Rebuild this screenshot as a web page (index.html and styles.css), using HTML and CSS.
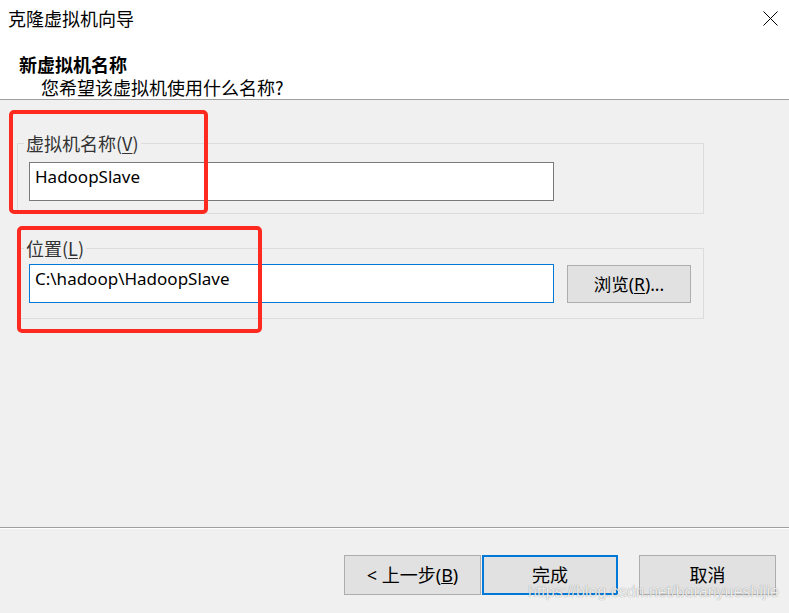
FILE: index.html
```html
<!DOCTYPE html>
<html lang="zh-CN">
<head>
<meta charset="utf-8">
<title>克隆虚拟机向导</title>
<link rel="stylesheet" href="styles.css">
</head>
<body>
<div class="dialog">
  <header class="header">
    <div class="titlebar">
      <span class="title">克隆虚拟机向导</span>
      <span class="close" aria-label="关闭">
        <svg width="15" height="15" viewBox="0 0 15 15"><path d="M0.5 0.5 L14.5 14.5 M14.5 0.5 L0.5 14.5" stroke="#000" stroke-width="1" fill="none"/></svg>
      </span>
    </div>
    <div class="heading">新虚拟机名称</div>
    <div class="subheading">您希望该虚拟机使用什么名称?</div>
  </header>
  <main class="content">
    <fieldset class="group group-name">
      <legend>虚拟机名称(<u>V</u>)</legend>
      <div class="field-row">
        <div class="textbox">HadoopSlave</div>
      </div>
    </fieldset>
    <fieldset class="group group-location">
      <legend>位置(<u>L</u>)</legend>
      <div class="field-row">
        <div class="textbox focused">C:\hadoop\HadoopSlave</div>
        <span class="btn browse">浏览(<u>R</u>)...</span>
      </div>
    </fieldset>
  </main>
  <footer class="footer">
    <span class="btn back">&lt; 上一步(<u>B</u>)</span>
    <span class="btn finish">完成</span>
    <span class="btn cancel">取消</span>
  </footer>
  <div class="mark mark-name"></div>
  <div class="mark mark-location"></div>
  <div class="watermark">https://blog.csdn.net/boranyueshijie</div>
</div>
</body>
</html>
```
FILE: styles.css
```css
* { box-sizing: border-box; }
html, body { margin: 0; padding: 0; }
body {
  background: #f0f0f0;
  font-family: "Noto Sans", "Noto Sans CJK SC", sans-serif;
  color: #000;
}
.dialog {
  position: relative;
  width: 789px;
  height: 613px;
  display: flex;
  flex-direction: column;
  background: #f0f0f0;
  overflow: hidden;
}
.header {
  height: 100px;
  background: #fff;
  border-bottom: 1px solid #a0a0a0;
  flex: none;
}
.titlebar {
  height: 37px;
  display: flex;
  align-items: center;
  justify-content: space-between;
  padding: 0 11px 0 8px;
}
.title {
  font-family: "Noto Sans CJK SC", sans-serif;
  font-size: 18px;
  line-height: 37px;
}
.close { display: flex; width: 15px; height: 15px; }
.heading {
  margin-top: 16px;
  padding-left: 19px;
  font-family: "Noto Sans CJK SC", sans-serif;
  font-weight: 700;
  font-size: 18px;
  line-height: 22px;
}
.subheading {
  margin-top: 1px;
  padding-left: 41px;
  font-family: "Noto Sans CJK SC", sans-serif;
  font-size: 18px;
  line-height: 22px;
}
.content {
  flex: 1;
  padding: 0 0 0 17px;
}
.group {
  width: 687px;
  margin: 0;
  border: 1px solid #dcdcdc;
  min-width: 0;
}
.group legend {
  font-family: "Noto Sans CJK SC", sans-serif;
  font-size: 18px;
  line-height: 20px;
  color: #333;
  padding: 0 2px;
  margin-left: -5px;
}
.group u { text-underline-offset: 2px; }
.group-name {
  margin-top: 33px;
  padding: 9px 11px 12px 11px;
}
.group-location {
  margin-top: 24px;
  padding: 6px 11px 15px 11px;
}
.field-row {
  display: flex;
  align-items: center;
}
.textbox {
  width: 525px;
  height: 39px;
  background: #fff;
  border: 1px solid #7a7a7a;
  padding: 0 5px;
  font-size: 17px;
  line-height: 27px;
  white-space: nowrap;
}
.textbox.focused { border-color: #0078d7; }
.btn {
  display: flex;
  align-items: center;
  justify-content: center;
  background: #e1e1e1;
  border: 1px solid #adadad;
  font-family: "Noto Sans", "Noto Sans CJK SC", sans-serif;
  font-size: 18px;
  line-height: 18px;
  color: #000;
}
.browse {
  width: 124px;
  height: 38px;
  margin-left: 13px;
  font-size: 17.5px;
}
.footer {
  flex: none;
  height: 86px;
  border-top: 1px solid #a0a0a0;
  box-shadow: inset 0 1px 0 #fff;
  display: flex;
  justify-content: flex-end;
  align-items: flex-start;
  padding: 27px 13px 0 0;
}
.footer .btn { height: 40px; }
.back { width: 137px; }
.finish {
  width: 136px;
  margin-left: 1px;
  border: 2px solid #0078d7;
}
.cancel { width: 137px; margin-left: 21px; }
.mark {
  position: absolute;
  border: 4px solid #ff2a1f;
  border-radius: 5px;
}
.mark-name { left: 9px; top: 110px; width: 199px; height: 104px; }
.mark-location { left: 17px; top: 226px; width: 245px; height: 107px; }
.watermark {
  position: absolute;
  left: 528px;
  top: 584px;
  font-family: "Liberation Sans", sans-serif;
  font-size: 16px;
  line-height: 16px;
  color: rgba(255, 255, 255, 0.85);
  text-shadow: 0 0 1px rgba(0, 0, 0, 0.45);
  white-space: nowrap;
}
```
